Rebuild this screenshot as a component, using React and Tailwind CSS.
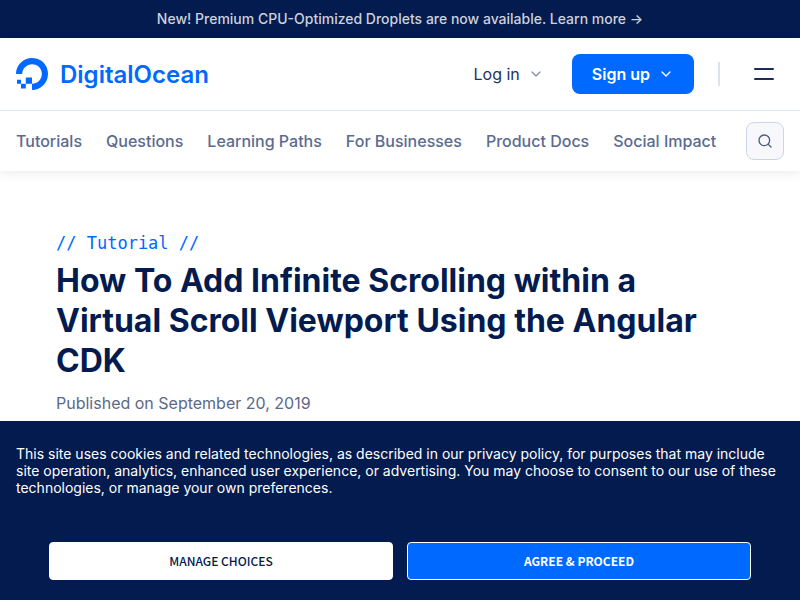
import React from "react";
import { ChevronDown, Search } from "lucide-react";

const links = ["Tutorials", "Questions", "Learning Paths", "For Businesses", "Product Docs", "Social Impact"];

function Logo() {
  return (
    <a href="#" className="flex items-center gap-3 text-[#0069ff]">
      <svg viewBox="0 0 32 32" className="size-8" fill="currentColor" aria-hidden="true">
        <path d="M16 32v-6.2c6.6 0 11.7-6.5 9.2-13.4a9.3 9.3 0 0 0-5.6-5.6C12.700 4.300 6.200 9.400 6.200 16H0C0 5.500 10.100-2.600 21.100.8c4.800 1.500 8.600 5.300 10.100 10.100C34.600 21.900 26.500 32 16 32z" />
        <path d="M9.800 19.600H16v6.200H9.800zM5 25.800h4.800v4.800H5zM1 21.800h4v4H1z" />
      </svg>
      <span className="pt-0.5 text-2xl font-semibold">DigitalOcean</span>
    </a>
  );
}

export default function App() {
  return (
    <div className="min-h-screen bg-white font-['Inter',sans-serif] text-[#031b4e]">
      <a href="#" className="flex h-[38px] items-center justify-center bg-[#031b4e] text-sm font-medium text-[#cdd1dc]">
        New! Premium CPU-Optimized Droplets are now available. Learn more →
      </a>
      <header className="shadow-[0_2px_10px_rgba(0,0,0,0.08)]">
        <div className="flex h-[73px] items-center justify-between border-b border-[#dfe7f3] px-4">
          <Logo />
          <div className="flex items-center">
            <button className="flex items-center gap-2 text-base text-[#24335a]">
              Log in
              <ChevronDown className="size-4 text-[#8592ad]" strokeWidth={2} />
            </button>
            <button className="ml-7 flex h-10 items-center gap-2 rounded-lg bg-[#0069ff] px-5 text-base font-semibold text-white">
              Sign up
              <ChevronDown className="size-4" strokeWidth={2} />
            </button>
            <span className="ml-6 h-6 w-0.5 bg-[#dde3ee]" />
            <button aria-label="Menu" className="mr-2.5 ml-[34px] flex w-5 flex-col gap-2">
              <span className="h-0.5 rounded bg-[#1b2d5b]" />
              <span className="h-0.5 rounded bg-[#1b2d5b]" />
            </button>
          </div>
        </div>
        <div className="flex h-[60px] items-center justify-between px-4">
          <nav className="flex gap-6 text-base font-medium text-[#5b6b8f]">
            {links.map((label) => (
              <a key={label} href="#" className="whitespace-nowrap">{label}</a>
            ))}
          </nav>
          <button aria-label="Search" className="flex size-[38px] items-center justify-center rounded-lg border border-[#ccd5e8] bg-[#f8f8fc] text-[#4d5b7c]">
            <Search className="size-4" strokeWidth={2} />
          </button>
        </div>
      </header>
      <main className="px-14 pt-[60px]">
        <p className="font-['DejaVu_Sans_Mono',monospace] text-[17px] leading-6 text-[#0069ff]">// Tutorial //</p>
        <h1 className="mt-1.5 text-[32px] leading-10 font-bold text-[#031b4e]">
          How To Add Infinite Scrolling within a Virtual Scroll Viewport Using the Angular CDK
        </h1>
        <p className="mt-2.5 text-base text-[#5b6987]">Published on September 20, 2019</p>
      </main>
      <section aria-label="Cookie consent" className="fixed inset-x-0 bottom-0 bg-[#031b4e] px-4 pt-6 pb-5 text-white">
        <p className="text-sm leading-[17px]">
          This site uses cookies and related technologies, as described in our privacy policy, for purposes that may include site operation, analytics, enhanced user experience, or advertising. You may choose to consent to our use of these technologies, or manage your own preferences.
        </p>
        <div className="mt-[46px] flex gap-3.5 px-[33px] font-['Noto_Sans_CJK_JP',sans-serif] text-xs">
          <button className="h-[38px] flex-1 rounded border border-white bg-white font-medium text-[#031b4e]">MANAGE CHOICES</button>
          <button className="h-[38px] flex-1 rounded border border-white bg-[#0069ff] font-bold">AGREE &amp; PROCEED</button>
        </div>
      </section>
    </div>
  );
}
